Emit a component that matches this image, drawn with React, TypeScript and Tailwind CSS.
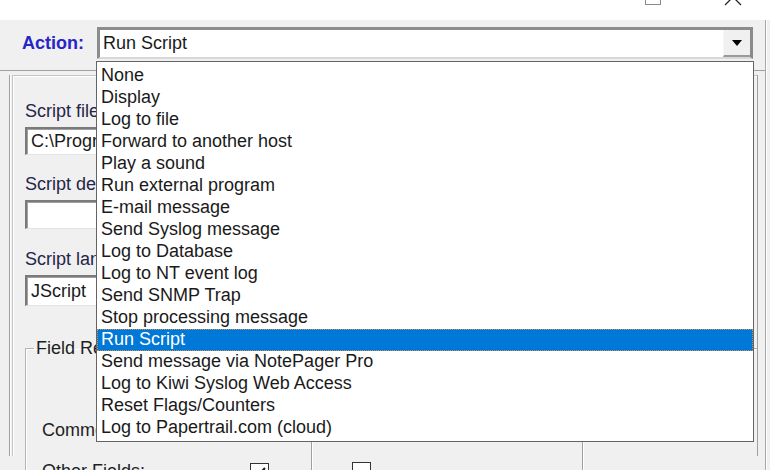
import React from "react";

const actions = [
  "None",
  "Display",
  "Log to file",
  "Forward to another host",
  "Play a sound",
  "Run external program",
  "E-mail message",
  "Send Syslog message",
  "Log to Database",
  "Log to NT event log",
  "Send SNMP Trap",
  "Stop processing message",
  "Run Script",
  "Send message via NotePager Pro",
  "Log to Kiwi Syslog Web Access",
  "Reset Flags/Counters",
  "Log to Papertrail.com (cloud)",
];

function Sunken({ className, children }: { className?: string; children?: React.ReactNode }) {
  return (
    <div
      className={
        "w-[320px] bg-white border-t-[2px] border-l-[2px] border-t-[#7a7a7a] border-l-[#7a7a7a] border-b border-r border-b-[#e3e3e3] border-r-[#e3e3e3] shadow-[inset_1px_1px_0_#a0a0a0] pl-[4px] flex items-center whitespace-nowrap overflow-hidden text-[18px] text-[#1a1a1a] " +
        (className ?? "")
      }
    >
      {children}
    </div>
  );
}

function CheckBox({ checked }: { checked?: boolean }) {
  return (
    <svg width="19" height="19" viewBox="0 0 19 19" className="shrink-0">
      <rect x="0.5" y="0.5" width="18" height="18" fill="#fff" stroke="#333" />
      {checked && <path d="M4 9.5l3.5 3.5L15 5" fill="none" stroke="#222" strokeWidth="2.2" />}
    </svg>
  );
}

export default function App() {
  return (
    <div className="w-[770px] h-[470px] overflow-hidden relative bg-[#f0f0f0] font-['Liberation_Sans',Arial,sans-serif]">
      {/* window title strip, controls cut off at the top */}
      <div className="h-[20px] bg-white relative">
        <svg className="absolute left-[640px] top-0" width="110" height="20" viewBox="0 0 110 20">
          <rect x="5.5" y="-10" width="15" height="14.5" fill="none" stroke="#8a8a8a" />
          <path d="M85 -11L101 5M101 -11L85 5" stroke="#222" strokeWidth="1.3" />
        </svg>
      </div>

      <div className="w-[766px] h-[450px] border-r border-r-[#a8a8a8] shadow-[1px_0_0_#fff]">
        {/* Action row */}
        <div className="flex items-start pt-[7px]">
          <div className="w-[97px] pl-[22px] h-[32px] flex items-center text-[18px] font-bold text-[#2626c8]">Action:</div>
          <div className="w-[656px] h-[32px] bg-white flex border-t-[3px] border-l-[3px] border-r-[3px] border-b-[2px] border-t-[#8c8c8c] border-l-[#8c8c8c] border-r-[#8a8a8a] border-b-[#d8d8d8]">
            <div className="flex-1 pl-[3px] flex items-center text-[18px] text-[#1a1a1a]">Run Script</div>
            <div className="w-[27px] h-full bg-[#f0f0f0] border-b-[2px] border-b-[#9a9a9a] border-l border-l-[#f7f7f7] flex items-center justify-center">
              <svg width="10" height="6" viewBox="0 0 10 6">
                <path d="M0 0h10L5 6z" fill="#000" />
              </svg>
            </div>
          </div>
        </div>

        {/* tab page */}
        <div className="mt-[11px] border-t border-t-[#a0a0a0] h-[382px]">
          <div className="ml-[9px] mr-[7px] h-full border-l border-r border-l-[#a0a0a0] border-r-[#a0a0a0] shadow-[inset_1px_0_0_#fff]">
            <div className="ml-[2px] mt-[4px] h-full border-l border-t border-l-[#c4c4c4] border-t-[#c4c4c4] shadow-[inset_1px_1px_0_#fff] pl-[12px] pt-[25px]">
              <div className="h-[21px] leading-[21px] text-[18px] text-[#25254a]">Script file:</div>
              <Sunken className="mt-[5px] h-[28px]">C:\Program Files\Syslogd\Scripts\Script_Action.txt</Sunken>
              <div className="mt-[19px] h-[21px] leading-[21px] text-[18px] text-[#25254a]">Script description:</div>
              <Sunken className="mt-[5px] h-[29px]" />
              <div className="mt-[20px] h-[21px] leading-[21px] text-[18px] text-[#25254a]">Script language:</div>
              <Sunken className="mt-[5px] h-[31px] w-[200px]">JScript</Sunken>

              <fieldset className="mt-[32px] h-[200px] border-l border-t border-[#b4b4b4] shadow-[inset_1px_1px_0_#fff]">
                <legend className="ml-[8px] px-[2px] h-[21px] leading-[21px] text-[18px] text-[#1e1e1e]">Field Result Variables</legend>
                <div className="flex h-full">
                  <div className="w-[285px] pl-[16px]">
                    <div className="mt-[61px] h-[21px] leading-[21px] text-[18px] text-[#1e1e1e]">Comments</div>
                    <div className="mt-[20px] flex items-start">
                      <div className="w-[208px] h-[21px] leading-[21px] text-[18px] text-[#1e1e1e]">Other Fields:</div>
                      <div className="mt-[2px]"><CheckBox checked /></div>
                    </div>
                  </div>
                  <div className="w-[271px] border-l border-l-[#a0a0a0] shadow-[inset_1px_0_0_#fff] pl-[40px] pt-[103px]">
                    <CheckBox />
                  </div>
                  <div className="flex-1 border-l border-l-[#a0a0a0] shadow-[inset_1px_0_0_#fff]" />
                </div>
              </fieldset>
            </div>
          </div>
        </div>
      </div>

      {/* opened drop-down list of the Action combo */}
      <div className="absolute left-[96px] top-[61px] w-[658px] bg-white border border-[#646464] pt-[3px] pb-[2px]">
        {actions.map((a) =>
          a === "Run Script" ? (
            <div
              key={a}
              className="h-[22px] pl-[4px] leading-[21px] text-[18px] text-white bg-[#0078d7] outline outline-1 outline-dotted outline-[#c9904e] -outline-offset-1"
            >
              {a}
            </div>
          ) : (
            <div key={a} className="h-[22px] pl-[4px] leading-[21px] text-[18px] text-[#1a1a1a] whitespace-nowrap">
              {a}
            </div>
          )
        )}
      </div>
    </div>
  );
}
